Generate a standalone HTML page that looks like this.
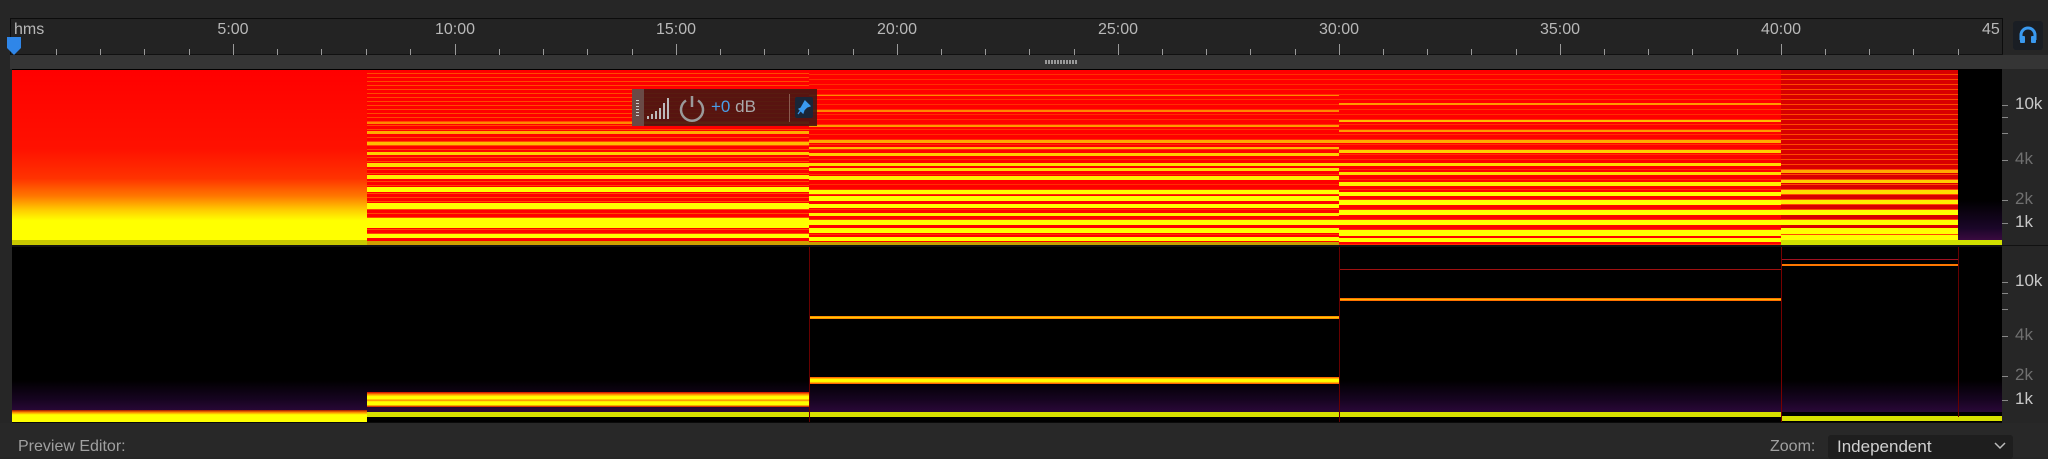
<!DOCTYPE html>
<html><head><meta charset="utf-8"><style>
*{margin:0;padding:0;box-sizing:border-box}
body{width:2048px;height:457px;background:#262626;position:relative;overflow:hidden;font-family:"Liberation Sans",sans-serif}
.a{position:absolute}
.s{position:absolute;left:0;right:0}
.t{position:absolute;bottom:0;width:1px;background:#9a9a9a}
.lbl{position:absolute;top:21px;color:#b8b8b8;font-size:16px;transform:translateX(-50%)}
.fl{position:absolute;left:2015px;font-size:17px;color:#c8c8c8}
.fd{color:#707070}
.ft{position:absolute;left:2002px;width:6px;height:1px;background:#888}
</style></head><body>
<!-- ruler -->
<div class="a" style="left:10px;top:18px;width:1993px;height:38px;background:#232323;border:1px solid #0c0c0c"></div>
<div class="a" style="left:10px;top:54px;width:1993px;height:1px;background:#111"></div>
<div class="a" style="left:14px;top:21px;color:#b8b8b8;font-size:16px">hms</div>
<div class="lbl" style="left:233px">5:00</div>
<div class="lbl" style="left:455px">10:00</div>
<div class="lbl" style="left:676px">15:00</div>
<div class="lbl" style="left:897px">20:00</div>
<div class="lbl" style="left:1118px">25:00</div>
<div class="lbl" style="left:1339px">30:00</div>
<div class="lbl" style="left:1560px">35:00</div>
<div class="lbl" style="left:1781px">40:00</div>
<div class="a" style="left:1982px;top:21px;color:#b8b8b8;font-size:16px">45</div>
<!-- ticks -->
<div class="a" style="left:0;top:18px;width:2002px;height:37px">
<div class="t" style="left:56px;height:6px"></div><div class="t" style="left:100px;height:6px"></div><div class="t" style="left:144px;height:6px"></div><div class="t" style="left:189px;height:6px"></div><div class="t" style="left:233px;height:11px"></div>
<div class="t" style="left:277px;height:6px"></div><div class="t" style="left:321px;height:6px"></div><div class="t" style="left:366px;height:6px"></div><div class="t" style="left:410px;height:6px"></div><div class="t" style="left:455px;height:11px"></div>
<div class="t" style="left:499px;height:6px"></div><div class="t" style="left:543px;height:6px"></div><div class="t" style="left:587px;height:6px"></div><div class="t" style="left:632px;height:6px"></div><div class="t" style="left:676px;height:11px"></div>
<div class="t" style="left:720px;height:6px"></div><div class="t" style="left:764px;height:6px"></div><div class="t" style="left:808px;height:6px"></div><div class="t" style="left:853px;height:6px"></div><div class="t" style="left:897px;height:11px"></div>
<div class="t" style="left:941px;height:6px"></div><div class="t" style="left:985px;height:6px"></div><div class="t" style="left:1029px;height:6px"></div><div class="t" style="left:1074px;height:6px"></div><div class="t" style="left:1118px;height:11px"></div>
<div class="t" style="left:1162px;height:6px"></div><div class="t" style="left:1206px;height:6px"></div><div class="t" style="left:1250px;height:6px"></div><div class="t" style="left:1295px;height:6px"></div><div class="t" style="left:1339px;height:11px"></div>
<div class="t" style="left:1383px;height:6px"></div><div class="t" style="left:1427px;height:6px"></div><div class="t" style="left:1471px;height:6px"></div><div class="t" style="left:1516px;height:6px"></div><div class="t" style="left:1560px;height:11px"></div>
<div class="t" style="left:1604px;height:6px"></div><div class="t" style="left:1648px;height:6px"></div><div class="t" style="left:1692px;height:6px"></div><div class="t" style="left:1737px;height:6px"></div><div class="t" style="left:1781px;height:11px"></div>
<div class="t" style="left:1825px;height:6px"></div><div class="t" style="left:1869px;height:6px"></div><div class="t" style="left:1913px;height:6px"></div><div class="t" style="left:1958px;height:6px"></div>
</div>
<!-- playhead -->
<svg class="a" style="left:6px;top:36px" width="16" height="20"><path d="M1 1H15V12L8 19L1 12Z" fill="#2f86e8"/></svg>
<!-- headphone button -->
<div class="a" style="left:2013px;top:21px;width:30px;height:29px;background:#1a1e24;border-radius:3px"></div>
<svg class="a" style="left:2018px;top:25px" width="20" height="20" viewBox="0 0 20 20"><path d="M3 15V10a7 7 0 0 1 14 0v5" fill="none" stroke="#3a9af0" stroke-width="3"/><rect x="2" y="11" width="5" height="7" rx="1" fill="#3a9af0"/><rect x="13" y="11" width="5" height="7" rx="1" fill="#3a9af0"/></svg>
<!-- gray strip -->
<div class="a" style="left:10px;top:55px;width:2038px;height:14px;background:#353535"></div>
<div class="a" style="left:1045px;top:60px;width:32px;height:4px;background:repeating-linear-gradient(90deg,#999 0 2px,transparent 2px 3px)"></div>

<!-- spectrogram -->
<div class="a" style="left:12px;top:69px;width:1990px;height:354px;background:#000"></div>
<!-- upper seg1 -->
<div class="a" style="left:12px;top:70px;width:355px;height:175px;background:linear-gradient(#f00 0,#f10 45%,#f30 62%,#f70 72%,#fc0 80%,#ff0 86%,#ff0 97%,#c8c800 97%)"></div>
<!-- seg2 -->
<div class="a" style="left:367px;top:70px;width:442px;height:175px;background:repeating-linear-gradient(#f00 0 3px,#ff4a00 3px 4px)">
<div class="s" style="top:52px;height:2px;background:#f80"></div>
<div class="s" style="top:61px;height:3px;background:#fa0"></div>
<div class="s" style="top:72px;height:3px;background:#fb0"></div>
<div class="s" style="top:82px;height:3px;background:#fc0"></div>
<div class="s" style="top:93px;height:4px;background:#fd0"></div>
<div class="s" style="top:105px;height:4px;background:#fe0"></div>
<div class="s" style="top:117px;height:5px;background:#ff0"></div>
<div class="s" style="top:133px;height:6px;background:#ff0"></div>
<div class="s" style="top:148px;height:10px;background:#ff0"></div>
<div class="s" style="top:164px;height:4px;background:#ff0"></div>
<div class="s" style="top:171px;height:4px;background:#d0a000"></div>
</div>
<!-- seg3 -->
<div class="a" style="left:809px;top:70px;width:530px;height:175px;background:repeating-linear-gradient(#f00 0 4px,#ff3000 4px 5px)">
<div class="s" style="top:25px;height:1px;background:#f80"></div>
<div class="s" style="top:40px;height:2px;background:#f80"></div>
<div class="s" style="top:55px;height:2px;background:#f90"></div>
<div class="s" style="top:70px;height:3px;background:#fa0"></div>
<div class="s" style="top:77px;height:2px;background:#fb0"></div>
<div class="s" style="top:83px;height:3px;background:#fc0"></div>
<div class="s" style="top:93px;height:3px;background:#fd0"></div>
<div class="s" style="top:98px;height:3px;background:#fd0"></div>
<div class="s" style="top:106px;height:4px;background:#fe0"></div>
<div class="s" style="top:120px;height:4px;background:#ff0"></div>
<div class="s" style="top:126px;height:5px;background:#ff0"></div>
<div class="s" style="top:134px;height:4px;background:#ff0"></div>
<div class="s" style="top:143px;height:3px;background:#fe0"></div>
<div class="s" style="top:150px;height:5px;background:#ff0"></div>
<div class="s" style="top:158px;height:5px;background:#ff0"></div>
<div class="s" style="top:167px;height:4px;background:#ff0"></div>
<div class="s" style="top:172px;height:3px;background:#c8a000"></div>
</div>
<!-- seg4 -->
<div class="a" style="left:1339px;top:70px;width:442px;height:175px;background:repeating-linear-gradient(#f00 0 4px,#ff3000 4px 5px)">
<div class="s" style="top:33px;height:2px;background:#f90"></div>
<div class="s" style="top:50px;height:2px;background:#fb0"></div>
<div class="s" style="top:60px;height:2px;background:#f90"></div>
<div class="s" style="top:70px;height:3px;background:#fa0"></div>
<div class="s" style="top:80px;height:3px;background:#fc0"></div>
<div class="s" style="top:93px;height:3px;background:#fd0"></div>
<div class="s" style="top:102px;height:3px;background:#fd0"></div>
<div class="s" style="top:112px;height:4px;background:#fe0"></div>
<div class="s" style="top:122px;height:4px;background:#ff0"></div>
<div class="s" style="top:130px;height:5px;background:#ff0"></div>
<div class="s" style="top:140px;height:5px;background:#ff0"></div>
<div class="s" style="top:150px;height:5px;background:#ff0"></div>
<div class="s" style="top:160px;height:6px;background:#ff0"></div>
<div class="s" style="top:168px;height:4px;background:#ff0"></div>
</div>
<!-- seg5 -->
<div class="a" style="left:1781px;top:70px;width:177px;height:170px;background:repeating-linear-gradient(#d80000 0 4px,#ff4a00 4px 5px)">
<div class="s" style="top:100px;height:3px;background:#fa0"></div>
<div class="s" style="top:110px;height:3px;background:#fc0"></div>
<div class="s" style="top:120px;height:4px;background:#fd0"></div>
<div class="s" style="top:130px;height:4px;background:#fe0"></div>
<div class="s" style="top:140px;height:5px;background:#ff0"></div>
<div class="s" style="top:150px;height:5px;background:#ff0"></div>
<div class="s" style="top:158px;height:6px;background:#ff0"></div>
<div class="s" style="top:165px;height:5px;background:#ff0"></div>
</div>
<div class="a" style="left:1958px;top:200px;width:44px;height:40px;background:linear-gradient(#000,#1a0628 70%,#3a0a40)"></div>
<div class="a" style="left:1781px;top:240px;width:221px;height:5px;background:#d0e000"></div>
<div class="a" style="left:12px;top:245px;width:1990px;height:2px;background:#111"></div>

<!-- lower channel -->
<div class="a" style="left:12px;top:380px;width:1990px;height:32px;background:linear-gradient(#000,#160420 60%,#2a0838)"></div>
<div class="a" style="left:12px;top:410px;width:355px;height:12px;background:linear-gradient(#a01000,#f80 20%,#ff0 40%,#ff0 100%)"></div>
<div class="a" style="left:367px;top:392px;width:442px;height:15px;background:linear-gradient(#c00 0,#f80 15%,#ff0 30%,#ff0 45%,#f80 55%,#ff0 65%,#ff0 85%,#c00 100%)"></div>
<div class="a" style="left:367px;top:412px;width:442px;height:5px;background:#d8e000"></div>
<div class="a" style="left:809px;top:316px;width:530px;height:3px;background:linear-gradient(#f60,#fd0,#f60)"></div>
<div class="a" style="left:809px;top:377px;width:530px;height:7px;background:linear-gradient(#f40,#ff0 35%,#ff0 65%,#f40)"></div>
<div class="a" style="left:1339px;top:269px;width:442px;height:1px;background:#a01010"></div>
<div class="a" style="left:1339px;top:298px;width:442px;height:3px;background:linear-gradient(#f40,#fc0,#f40)"></div>
<div class="a" style="left:809px;top:412px;width:972px;height:5px;background:#d8e000"></div>
<div class="a" style="left:1781px;top:259px;width:177px;height:1px;background:#a01020"></div>
<div class="a" style="left:1781px;top:264px;width:177px;height:2px;background:#f70"></div>
<div class="a" style="left:1781px;top:416px;width:221px;height:5px;background:#d8e000"></div>
<div class="a" style="left:809px;top:247px;width:1px;height:176px;background:#600"></div>
<div class="a" style="left:1339px;top:247px;width:1px;height:176px;background:#600"></div>
<div class="a" style="left:1781px;top:247px;width:1px;height:176px;background:#700"></div>
<div class="a" style="left:1958px;top:247px;width:1px;height:170px;background:#600"></div>
<div class="a" style="left:12px;top:422px;width:1990px;height:1px;background:#0a0a0a"></div>

<!-- freq axis -->
<div class="ft" style="top:105px"></div><div class="ft" style="top:117px"></div><div class="ft" style="top:133px"></div><div class="ft" style="top:160px"></div><div class="ft" style="top:200px"></div><div class="ft" style="top:223px"></div>
<div class="fl" style="top:94px">10k</div><div class="fl fd" style="top:149px">4k</div><div class="fl fd" style="top:189px">2k</div><div class="fl" style="top:212px">1k</div>
<div class="ft" style="top:282px"></div><div class="ft" style="top:293px"></div><div class="ft" style="top:309px"></div><div class="ft" style="top:336px"></div><div class="ft" style="top:376px"></div><div class="ft" style="top:400px"></div>
<div class="fl" style="top:271px">10k</div><div class="fl fd" style="top:325px">4k</div><div class="fl fd" style="top:365px">2k</div><div class="fl" style="top:389px">1k</div>
<div class="a" style="left:2002px;top:245px;width:46px;height:1px;background:#111"></div>

<!-- HUD -->
<div class="a" style="left:632px;top:89px;width:185px;height:37px;background:rgba(70,22,18,0.9)"></div>
<div class="a" style="left:632px;top:89px;width:12px;height:37px;background:#6a4a46"></div>
<div class="a" style="left:636px;top:100px;width:3px;height:16px;background:repeating-linear-gradient(#ccc 0 1px,transparent 1px 3px)"></div>
<svg class="a" style="left:646px;top:94px" width="26" height="28"><g fill="#bbb"><rect x="1" y="22" width="2" height="3"/><rect x="5" y="20" width="2" height="5"/><rect x="9" y="17" width="2" height="8"/><rect x="13" y="14" width="2" height="11"/><rect x="17" y="9" width="2" height="16"/><rect x="21" y="4" width="2" height="21"/></g></svg>
<svg class="a" style="left:678px;top:94px" width="28" height="28" viewBox="0 0 28 28"><path d="M8 6.5A11 11 0 1 0 20 6.5" fill="none" stroke="#9a9a9a" stroke-width="2.5"/><path d="M14 2V13" stroke="#9a9a9a" stroke-width="2.5"/></svg>
<div class="a" style="left:711px;top:97px;font-size:17px;color:#4a9ee8">+0 <span style="color:#aaa">dB</span></div>
<div class="a" style="left:789px;top:94px;width:1px;height:28px;background:#8a5a50"></div>
<div class="a" style="left:795px;top:97px;width:18px;height:21px;background:#1a2638;border-radius:2px"></div>
<svg class="a" style="left:797px;top:100px" width="14" height="15" viewBox="0 0 14 15"><path d="M8 1L13 6L10 7L7 10L6 13L2 9L4 8ZM4 10L1 14" fill="#3a9af0" stroke="#3a9af0" stroke-width="1.2"/></svg>

<!-- bottom -->
<div class="a" style="left:0;top:423px;width:2048px;height:34px;background:#282828"></div>
<div class="a" style="left:18px;top:438px;font-size:16px;color:#a0a0a0">Preview Editor:</div>
<div class="a" style="left:1770px;top:438px;font-size:16px;color:#a0a0a0">Zoom:</div>
<div class="a" style="left:1828px;top:435px;width:185px;height:24px;background:#1e1e1e;border-radius:3px"></div>
<div class="a" style="left:1837px;top:437px;font-size:17px;color:#d0d0d0">Independent</div>
<svg class="a" style="left:1994px;top:442px" width="12" height="8"><path d="M1 1L6 6L11 1" fill="none" stroke="#bbb" stroke-width="1.5"/></svg>
</body></html>
